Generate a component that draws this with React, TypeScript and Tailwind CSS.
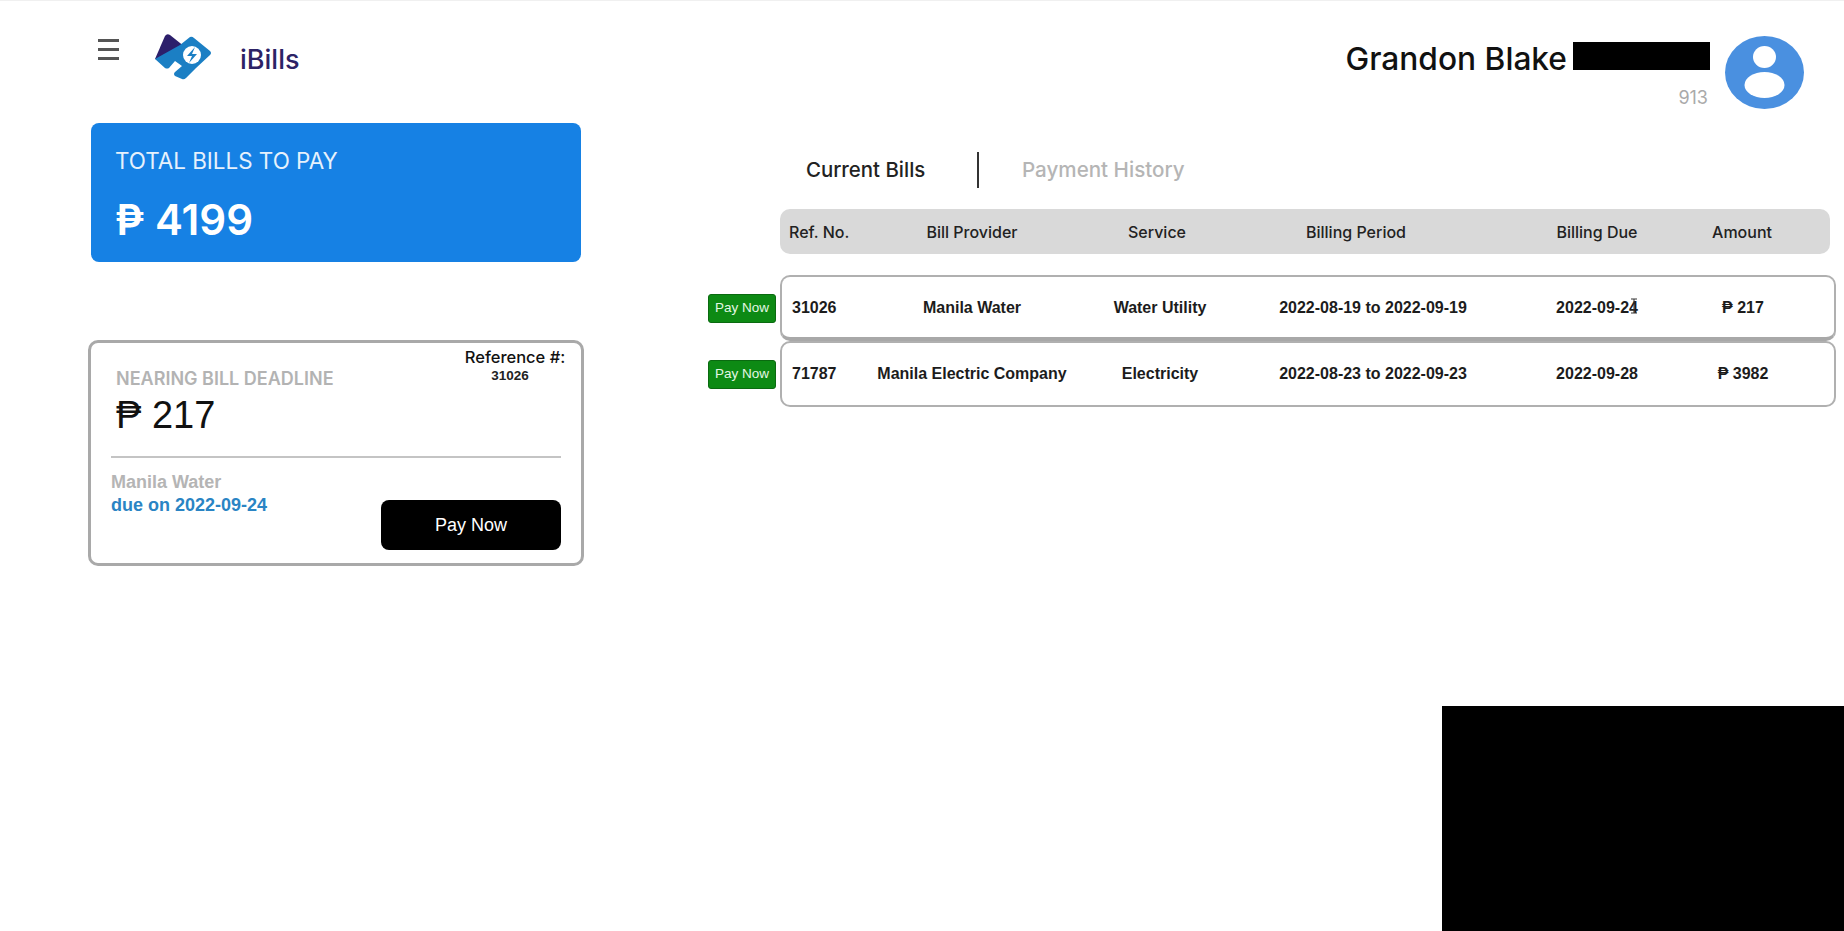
import React from "react";

const poppins = "font-['Inter','Noto_Sans',sans-serif]";
const arial = "font-['Liberation_Sans','DejaVu_Sans',sans-serif]";

const bills = [
  { ref: "31026", provider: "Manila Water", service: "Water Utility", period: "2022-08-19 to 2022-09-19", due: "2022-09-24", amount: "₱ 217" },
  { ref: "71787", provider: "Manila Electric Company", service: "Electricity", period: "2022-08-23 to 2022-09-23", due: "2022-09-28", amount: "₱ 3982" },
];

const Logo = () => (
  <svg width="58" height="48" viewBox="0 0 58 48" className="shrink-0">
    <path d="M0 26 L10 3 Q12 0 15 2 L30 14 L14 28 Z" fill="#2c1f6b" />
    <path d="M0 26 L25 12 L35 4 Q37 3 39 5 L55 18 Q57 20 55 22 L41 35 L31 45 Q29 47 27 46 L20 43 Q18 41 20 39 L27 33 L20 28 L14 35 Q12 36 10 35 Z" fill="#1b7fc4" />
    <circle cx="37" cy="22" r="9" fill="#fff" />
    <path d="M40 14 L32 23 L37 23 L34 30 L42 21 L37 21 Z" fill="#1b7fc4" />
  </svg>
);

const Avatar = () => (
  <svg width="79" height="73" viewBox="0 0 79 73" className="shrink-0">
    <ellipse cx="39.5" cy="36.5" rx="39.5" ry="36.5" fill="#4a90e0" />
    <ellipse cx="39.5" cy="21" rx="11.5" ry="11" fill="#fff" />
    <ellipse cx="39.5" cy="49" rx="20" ry="13" fill="#fff" />
  </svg>
);

const Hamburger = () => (
  <div className="flex w-[21px] flex-col gap-[6px]">
    <div className="h-[3px] bg-[#555]" />
    <div className="h-[3px] bg-[#555]" />
    <div className="h-[3px] bg-[#555]" />
  </div>
);

const DeadlineCard = () => (
  <div className={`mt-[78px] h-[226px] w-[496px] rounded-[10px] border-[3px] border-[#a9a9a9] pt-[4px] pr-[20px] pl-[20px] ${arial}`}>
    <div className="flex justify-between">
      <div className="pt-[20px] pl-[5px]">
        <div className={`text-[18px] leading-[24px] font-semibold text-[#b3b3b3] ${poppins}`}>NEARING BILL DEADLINE</div>
        <div className="mt-[2px] text-[38px] leading-[44px] text-[#111]">₱ 217</div>
      </div>
      <div className="-mr-[6px] w-[104px] text-center">
        <div className={`text-[16.5px] leading-[20px] font-medium whitespace-nowrap text-[#111] ${poppins}`}>Reference #:</div>
        <div className="mt-[1px] pr-[10px] text-[13.5px] leading-[16px] font-bold text-[#222]">31026</div>
      </div>
    </div>
    <div className="mt-[19px] h-[2px] bg-[#c4c4c4]" />
    <div className="mt-[13px] flex justify-between">
      <div className="text-[18px] leading-[23px] font-bold">
        <div className="text-[#b5b5b5]">Manila Water</div>
        <div className="text-[#2a84c4]">due on 2022-09-24</div>
      </div>
      <button className="mt-[29px] h-[50px] w-[180px] rounded-[8px] bg-black text-[18px] text-white">Pay Now</button>
    </div>
  </div>
);

const BillRow = ({ bill, first }: { bill: (typeof bills)[number]; first: boolean }) => (
  <div className="flex items-center gap-[4px]">
    <button className={`h-[29px] w-[68px] rounded-[3px] border border-[#0a6a10] bg-[#0d8a14] text-[13.5px] text-[#e4f7e4] ${arial}`}>Pay Now</button>
    <div
      className={`grid h-[66px] flex-1 grid-cols-[78px_224px_152px_274px_174px_118px] items-center rounded-[10px] border-2 border-[#b0b0b0] text-[16px] font-bold text-[#1c1c1c] ${arial} ${first ? "border-b-[4px] border-b-[#a8a8a8] pt-[2px]" : ""}`}
    >
      <div className="pl-[10px]">{bill.ref}</div>
      <div className="text-center whitespace-nowrap">{bill.provider}</div>
      <div className="text-center">{bill.service}</div>
      <div className="text-center whitespace-nowrap">{bill.period}</div>
      <div className="text-center">{bill.due}</div>
      <div className="text-center">{bill.amount}</div>
    </div>
  </div>
);

export default function App() {
  return (
    <div className="relative h-[931px] w-full overflow-hidden border-t border-[#f0f0f0] bg-white">
      <div className="flex">
        {/* left column */}
        <div className="w-[708px] shrink-0 pl-[88px]">
          <div className="flex h-[122px] items-start">
            <div className="mt-[38px] ml-[10px]"><Hamburger /></div>
            <div className="mt-[32px] ml-[36px]"><Logo /></div>
            <div className={`mt-[41px] ml-[27px] text-[27px] leading-[36px] font-medium text-[#2c2266] ${poppins}`}>iBills</div>
          </div>
          <div className={`ml-[3px] h-[139px] w-[490px] rounded-[8px] bg-[#1681e4] pt-[23px] pl-[24px] text-white ${poppins}`}>
            <div className="text-[22.4px] leading-[30px] text-[#e6f1fc]">TOTAL BILLS TO PAY</div>
            <div className="mt-[18px] text-[42px] leading-[52px] font-semibold">₱ 4199</div>
          </div>
          <DeadlineCard />
        </div>

        {/* right column */}
        <div className="flex-1 pr-[8px]">
          <div className="flex justify-end pt-[35px] pr-[32px]">
            <div className="flex flex-col items-end pt-[3px] pr-[15px]">
              <div className="flex items-center gap-[6px]">
                <span className={`text-[31.7px] leading-[40px] font-medium text-[#111] ${poppins}`}>Grandon Blake</span>
                <div className="-mt-[6px] h-[28px] w-[137px] bg-black" />
              </div>
              <div className={`mt-[7px] pr-[2px] text-[18px] leading-[24px] text-[#aaa] ${poppins}`}>913</div>
            </div>
            <Avatar />
          </div>

          <div className={`mt-[42px] ml-[98px] flex items-center ${poppins}`}>
            <span className="w-[171px] text-[20.4px] font-medium text-[#222]">Current Bills</span>
            <div className="h-[36px] w-[2px] bg-[#333]" />
            <span className="ml-[43px] text-[20.6px] font-medium text-[#b5b5b5]">Payment History</span>
          </div>

          <div className={`mt-[21px] mr-[6px] ml-[72px] grid h-[45px] grid-cols-[80px_224px_146px_252px_230px_60px] items-center rounded-[10px] bg-[#d9d9d9] text-[16px] font-medium text-[#222] ${poppins}`}>
            <div className="pl-[9px] whitespace-nowrap">Ref. No.</div>
            <div className="text-center">Bill Provider</div>
            <div className="text-center">Service</div>
            <div className="text-center">Billing Period</div>
            <div className="text-center">Billing Due</div>
            <div className="text-center">Amount</div>
          </div>

          <div className="mt-[21px]">
            {bills.map((bill, i) => (
              <BillRow key={bill.ref} bill={bill} first={i === 0} />
            ))}
          </div>
        </div>
      </div>

      {/* i-beam cursor over the due date */}
      <svg width="8" height="16" viewBox="0 0 8 16" className="absolute top-[297px] left-[1630px]">
        <path d="M1 1 H7 M4 1 V15 M1 15 H7" stroke="#333" strokeWidth="1" fill="none" />
      </svg>

      {/* redaction block */}
      <div className="absolute right-0 bottom-0 h-[225px] w-[402px] bg-black" />
    </div>
  );
}
